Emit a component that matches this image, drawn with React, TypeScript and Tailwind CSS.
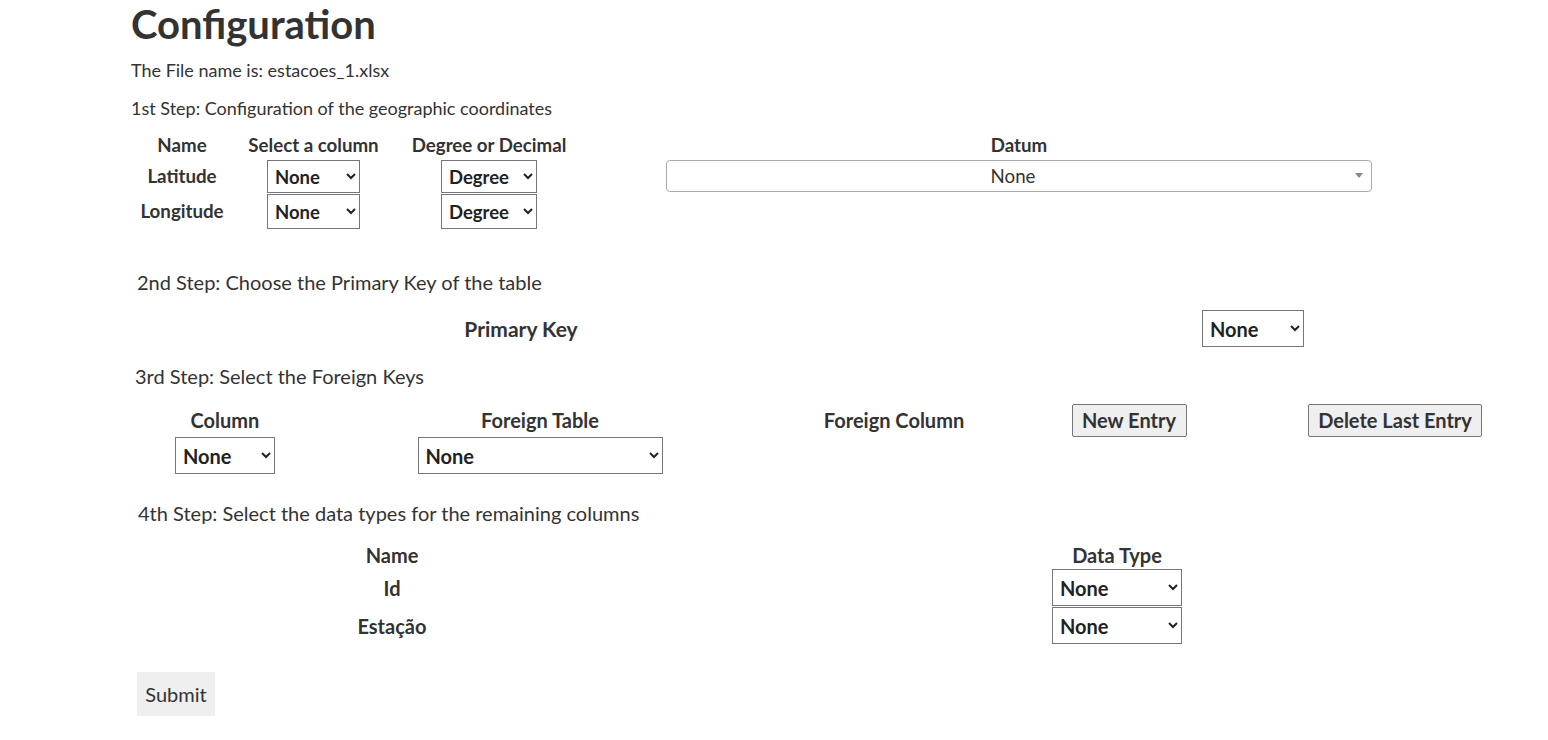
import React from 'react'

const sel = "h-full border border-[#767676] bg-white font-bold text-[#222] pl-[3px] pr-[5px]"

export default function App() {
  return (
    <div className="min-h-screen bg-white text-[#333] font-['Lato',sans-serif] pl-[131px]">
      <h1 className="text-[40px] leading-[48px] font-bold">Configuration</h1>

      <p className="mt-[10px] text-[18px] leading-[24px]">The File name is: estacoes_1.xlsx</p>
      <p className="mt-[14px] text-[18px] leading-[24px]">1st Step: Configuration of the geographic coordinates</p>

      {/* step 1 */}
      <div className="grid grid-cols-[102px_161px_190px_870px] text-[18.7px] font-bold mt-[11px]">
        <div className="h-[29px] flex items-center justify-center">Name</div>
        <div className="h-[29px] flex items-center justify-center">Select a column</div>
        <div className="h-[29px] flex items-center justify-center">Degree or Decimal</div>
        <div className="h-[29px] flex items-center justify-center">Datum</div>

        <div className="h-[33px] flex items-center justify-center">Latitude</div>
        <div className="h-[33px] flex justify-center">
          <select className={sel + " w-[93px] text-[18.5px]"}><option>None</option></select>
        </div>
        <div className="h-[33px] flex justify-center">
          <select className={sel + " w-[96px] text-[18.5px]"}><option>Degree</option><option>Decimal</option></select>
        </div>
        <div className="h-[33px] flex justify-center">
          <div className="relative w-[706px] h-[32px]">
            <select className="appearance-none w-full h-full border border-[#aaa] rounded-[4px] bg-white text-center pr-[12px] text-[18.7px] font-normal text-[#333]">
              <option>None</option>
            </select>
            <span className="absolute right-[9px] top-[13px] w-0 h-0 border-l-[4px] border-r-[4px] border-t-[5px] border-l-transparent border-r-transparent border-t-[#888] pointer-events-none"></span>
          </div>
        </div>

        <div className="h-[35px] mt-[1px] flex items-center justify-center">Longitude</div>
        <div className="h-[35px] mt-[1px] flex justify-center">
          <select className={sel + " w-[93px] text-[18.5px]"}><option>None</option></select>
        </div>
        <div className="h-[35px] mt-[1px] flex justify-center">
          <select className={sel + " w-[96px] text-[18.5px]"}><option>Degree</option><option>Decimal</option></select>
        </div>
        <div></div>
      </div>

      {/* step 2 */}
      <p className="mt-[40px] ml-[6px] text-[20px] leading-[26px]">2nd Step: Choose the Primary Key of the table</p>
      <div className="flex items-center mt-[15px] h-[37px]">
        <div className="w-[780px] text-center text-[21px] font-bold">Primary Key</div>
        <select className={sel + " ml-[291px] w-[102px] text-[20px]"}><option>None</option></select>
      </div>

      {/* step 3 */}
      <p className="mt-[16px] ml-[4px] text-[20px] leading-[26px]">3rd Step: Select the Foreign Keys</p>
      <div className="flex items-center mt-[14px] h-[34px] text-[20px] font-bold">
        <div className="w-[188px] text-center">Column</div>
        <div className="w-[442px] text-center">Foreign Table</div>
        <div className="w-[266px] text-center">Foreign Column</div>
        <div className="w-[204px] flex justify-center">
          <button className="h-[33px] w-[115px] bg-[#efefef] border border-[#767676] rounded-[2px]">New Entry</button>
        </div>
        <div className="w-[250px]">
          <button className="ml-[77px] h-[33px] w-[174px] bg-[#efefef] border border-[#767676] rounded-[2px]">Delete Last Entry</button>
        </div>
      </div>
      <div className="flex h-[37px]">
        <div className="w-[188px] flex justify-center">
          <select className={sel + " w-[100px] text-[20px]"}><option>None</option></select>
        </div>
        <div className="w-[442px] flex justify-center">
          <select className={sel + " w-[245px] text-[20px]"}><option>None</option></select>
        </div>
      </div>

      {/* step 4 */}
      <p className="mt-[26px] ml-[7px] text-[20px] leading-[26px]">4th Step: Select the data types for the remaining columns</p>
      <div className="flex items-center mt-[15px] h-[28px] text-[20px] font-bold">
        <div className="w-[522px] text-center">Name</div>
        <div className="ml-[399px] w-[130px] text-center">Data Type</div>
      </div>
      <div className="flex items-center h-[37px] text-[20px] font-bold">
        <div className="w-[522px] text-center">Id</div>
        <select className={sel + " ml-[399px] w-[130px] h-[37px] text-[20px]"}><option>None</option></select>
      </div>
      <div className="flex items-center h-[37px] mt-[1px] text-[20px] font-bold">
        <div className="w-[522px] text-center">Estação</div>
        <select className={sel + " ml-[399px] w-[130px] h-[37px] text-[20px]"}><option>None</option></select>
      </div>

      <button className="mt-[28px] ml-[6px] h-[44px] w-[78px] bg-[#efefef] text-[20px]">Submit</button>
    </div>
  )
}
